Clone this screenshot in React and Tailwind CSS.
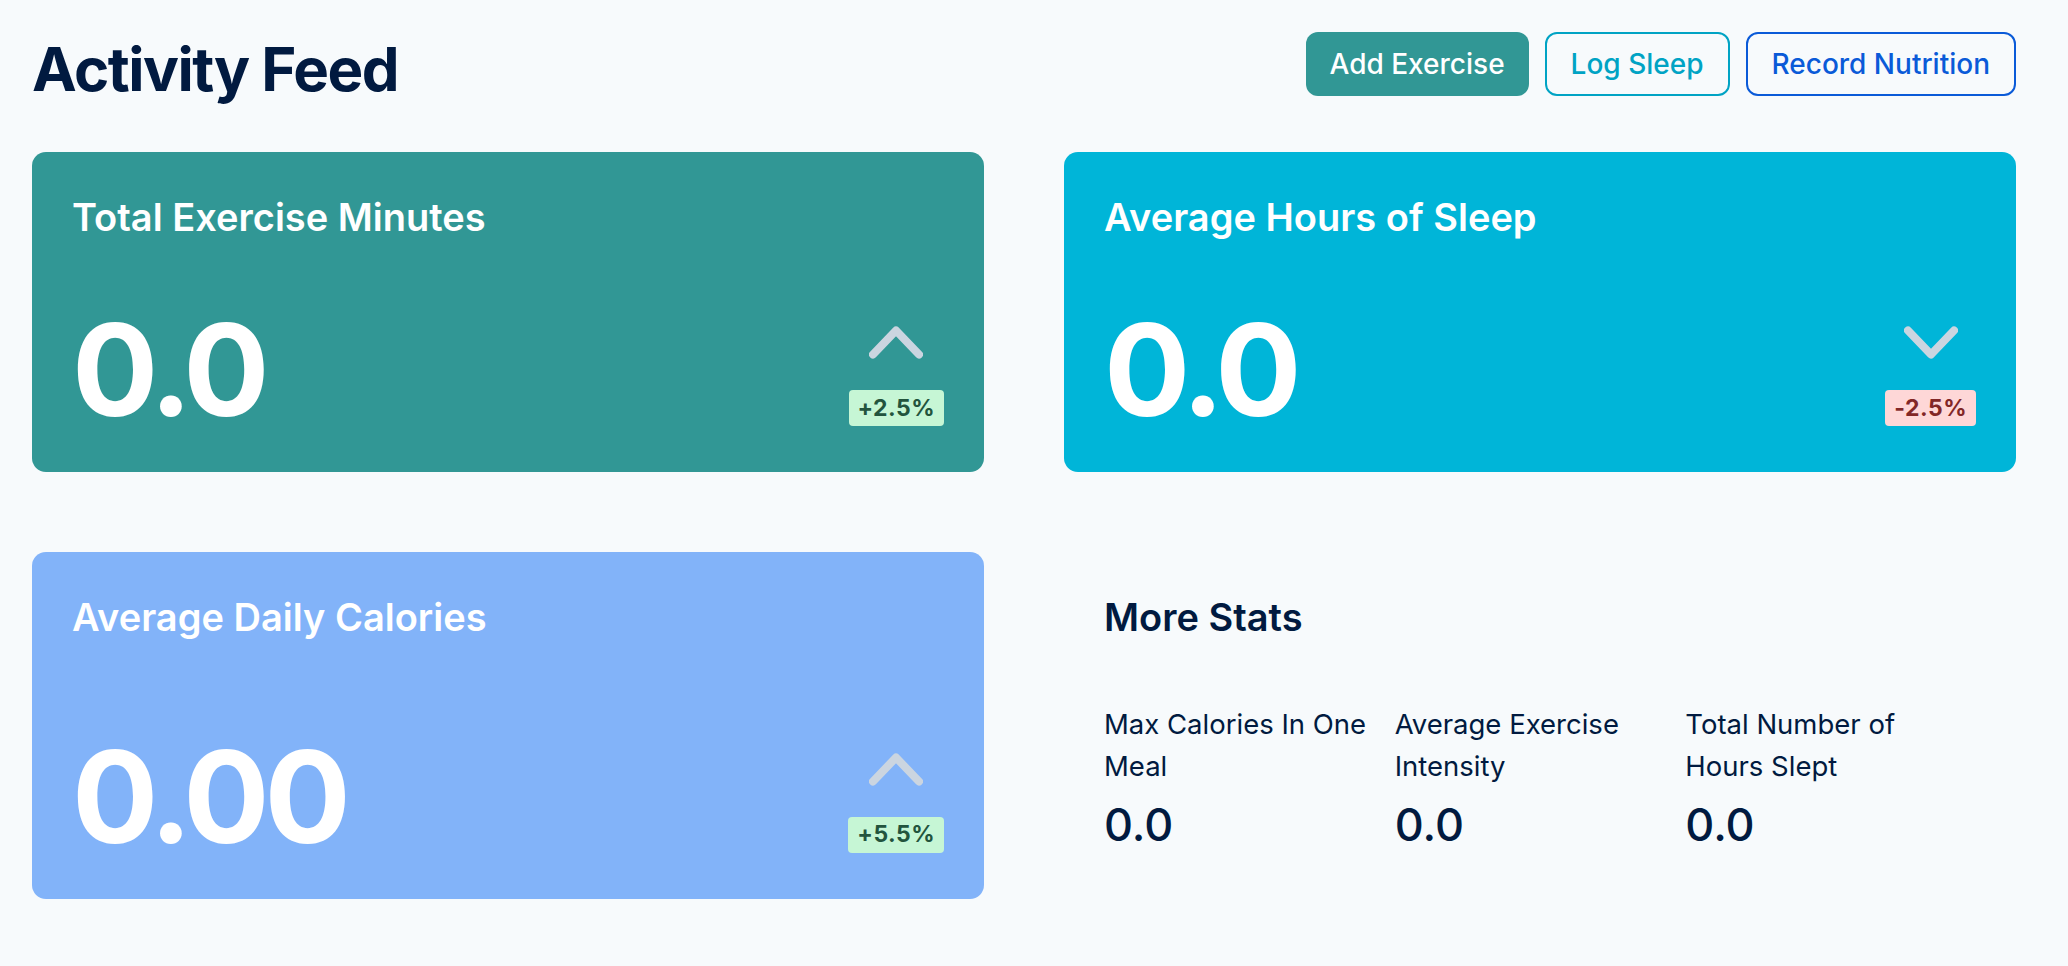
import React from 'react';

const UpChevron = () => (
  <svg width="54" height="33" viewBox="0 0 54 33" fill="none">
    <polyline points="4,28.5 27,4.5 50,28.5" stroke="#cbd5e0" strokeWidth="8" strokeLinecap="round" strokeLinejoin="round" />
  </svg>
);

const DownChevron = () => (
  <svg width="54" height="33" viewBox="0 0 54 33" fill="none">
    <polyline points="4,4.5 27,28.5 50,4.5" stroke="#cbd5e0" strokeWidth="8" strokeLinecap="round" strokeLinejoin="round" />
  </svg>
);

const StatCard = ({ title, value, change, up, bg }) => (
  <div className={`rounded-[14px] px-10 pt-10 pb-[38px] flex flex-col ${bg}`}>
    <h2 className="text-[38px] leading-[50px] font-semibold text-white">{title}</h2>
    <div className="flex-1 flex items-end justify-between mt-16">
      <span className="text-[128px] leading-none font-bold tracking-[-0.04em] text-white">{value}</span>
      <div className="flex flex-col items-center gap-[31px] mb-2">
        {up ? <UpChevron /> : <DownChevron />}
        <span
          className={`h-9 px-[9px] flex items-center rounded text-[23px] font-bold tracking-[0.02em] ${
            up ? 'bg-[#c6f6d5] text-[#22543d]' : 'bg-[#fed7d7] text-[#822727]'
          }`}
        >
          {change}
        </span>
      </div>
    </div>
  </div>
);

const MiniStat = ({ label, value }) => (
  <div className="flex flex-col">
    <span className="text-[27.5px] leading-[41.6px] text-[#011a40] pr-2">{label}</span>
    <span className="text-[45px] leading-[1.5] font-medium text-[#011a40] mt-1">{value}</span>
  </div>
);

export default function App() {
  return (
    <div className="min-h-screen bg-[#f7fafc] pl-8 pr-[52px] pt-8 font-['Inter','Liberation_Sans',sans-serif]">
      <div className="h-16 flex items-start justify-between">
        <h1 className="text-[60px] leading-none font-bold tracking-tight text-[#011a40] mt-[7px]">Activity Feed</h1>
        <div className="flex gap-4">
          <button className="h-16 px-6 rounded-xl bg-[#319795] text-white text-[28px] font-medium">
            Add Exercise
          </button>
          <button className="h-16 px-6 rounded-xl border-2 border-[#00a3c4] text-[#00a3c4] text-[28px] font-medium">
            Log Sleep
          </button>
          <button className="h-16 px-6 rounded-xl border-2 border-[#0a5ad8] text-[#0a5ad8] text-[28px] font-medium">
            Record Nutrition
          </button>
        </div>
      </div>

      <div className="grid grid-cols-2 gap-20 mt-14">
        <StatCard title="Total Exercise Minutes" value="0.0" change="+2.5%" up bg="bg-[#319795]" />
        <StatCard title="Average Hours of Sleep" value="0.0" change="-2.5%" up={false} bg="bg-[#00b5d8]" />
        <StatCard title="Average Daily Calories" value="0.00" change="+5.5%" up bg="bg-[#82b3f9]" />
        <div className="p-10 flex flex-col">
          <h2 className="text-[38px] leading-[50px] font-semibold text-[#011a40]">More Stats</h2>
          <div className="grid grid-cols-3 mt-[62px]">
            <MiniStat label="Max Calories In One Meal" value="0.0" />
            <MiniStat label="Average Exercise Intensity" value="0.0" />
            <MiniStat label="Total Number of Hours Slept" value="0.0" />
          </div>
        </div>
      </div>
    </div>
  );
}
